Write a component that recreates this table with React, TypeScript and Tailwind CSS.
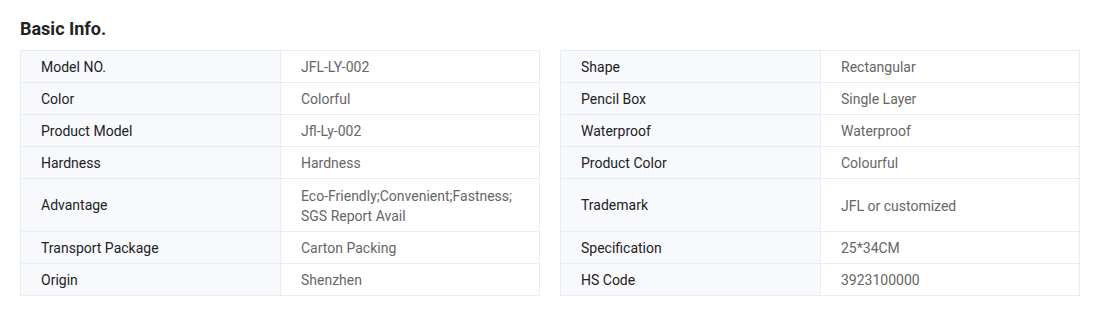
const rows: [string, string, string, string][] = [
  ["Model NO.", "JFL-LY-002", "Shape", "Rectangular"],
  ["Color", "Colorful", "Pencil Box", "Single Layer"],
  ["Product Model", "Jfl-Ly-002", "Waterproof", "Waterproof"],
  ["Hardness", "Hardness", "Product Color", "Colourful"],
  ["Advantage", "Eco-Friendly;Convenient;Fastness; SGS Report Avail", "Trademark", "JFL or customized"],
  ["Transport Package", "Carton Packing", "Specification", "25*34CM"],
  ["Origin", "Shenzhen", "HS Code", "3923100000"],
];

function Half({ label, value, first, tall }: { label: string; value: string; first: boolean; tall: boolean }) {
  return (
    <div
      className={`flex border-x border-b border-[#e8ecf3] ${first ? "border-t h-[33px]" : ""} ${
        tall ? "h-[53px]" : first ? "" : "h-[32px]"
      }`}
    >
      <div className="w-[260px] shrink-0 bg-[#f8f9fc] border-r border-[#e8ecf3] px-5 flex items-center text-[#222]">
        {label}
      </div>
      <div className="flex-1 px-5 pt-[1px] flex items-center text-[#666]">{value}</div>
    </div>
  );
}

export default function App() {
  return (
    <div className="bg-white px-5 pt-[17px] text-[14px] leading-[20px]" style={{ fontFamily: "Roboto, 'Liberation Sans', sans-serif" }}>
      <h2 className="text-[18px] leading-[24px] font-bold text-[#222] mb-[9px]">Basic Info.</h2>
      <div className="grid grid-cols-2 gap-x-5 w-[1060px]">
        {rows.map((r, i) => (
          <div key={i} className="contents">
            <Half label={r[0]} value={r[1]} first={i === 0} tall={i === 4} />
            <Half label={r[2]} value={r[3]} first={i === 0} tall={i === 4} />
          </div>
        ))}
      </div>
    </div>
  );
}
